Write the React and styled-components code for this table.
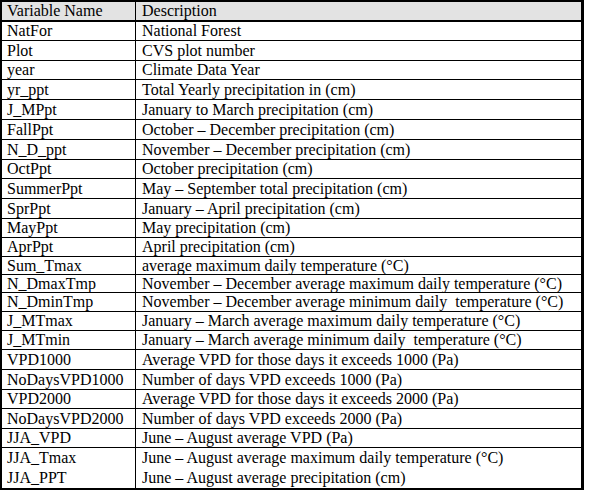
import React from 'react';
import styled, { createGlobalStyle } from 'styled-components';

const GlobalStyle = createGlobalStyle`
  html, body {
    margin: 0;
    padding: 0;
    background: #ffffff;
  }
`;

const Table = styled.div`
  box-sizing: border-box;
  width: 584px;
  border: 2px solid #000;
  border-right-width: 3px;
  font-family: 'Liberation Serif', 'Times New Roman', serif;
  font-size: 16px;
  color: #000;
`;

const Row = styled.div`
  box-sizing: border-box;
  display: grid;
  grid-template-columns: 134px 1fr;
  height: ${props => props.h}px;
  background: ${props => (props.head ? '#e3e3e3' : '#fff')};
  border-bottom: ${props => (props.last ? 0 : props.head ? 2 : props.open ? 0 : 1)}px solid #000;
`;

const Cell = styled.div`
  display: flex;
  align-items: center;
  padding-left: ${props => (props.first ? 5 : 6)}px;
  border-right: ${props => (props.first ? '1px solid #000' : 'none')};
  white-space: pre;
  overflow: hidden;
  line-height: 1;
`;

const rows = [
  ['NatFor', 'National Forest', 19],
  ['Plot', 'CVS plot number', 20],
  ['year', 'Climate Data Year', 19],
  ['yr_ppt', 'Total Yearly precipitation in (cm)', 20],
  ['J_MPpt', 'January to March precipitation (cm)', 20],
  ['FallPpt', 'October \u2013 December precipitation (cm)', 20],
  ['N_D_ppt', 'November \u2013 December precipitation (cm)', 20],
  ['OctPpt', 'October precipitation (cm)', 19],
  ['SummerPpt', 'May \u2013 September total precipitation (cm)', 20],
  ['SprPpt', 'January \u2013 April precipitation (cm)', 20],
  ['MayPpt', 'May precipitation (cm)', 19],
  ['AprPpt', 'April precipitation (cm)', 19],
  ['Sum_Tmax', 'average maximum daily temperature (\u00B0C)', 18],
  ['N_DmaxTmp', 'November \u2013 December average maximum daily temperature (\u00B0C)', 18],
  ['N_DminTmp', 'November \u2013 December average minimum daily  temperature (\u00B0C)', 19],
  ['J_MTmax', 'January \u2013 March average maximum daily temperature (\u00B0C)', 19],
  ['J_MTmin', 'January \u2013 March average minimum daily  temperature (\u00B0C)', 19],
  ['VPD1000', 'Average VPD for those days it exceeds 1000 (Pa)', 20],
  ['NoDaysVPD1000', 'Number of days VPD exceeds 1000 (Pa)', 20],
  ['VPD2000', 'Average VPD for those days it exceeds 2000 (Pa)', 19],
  ['NoDaysVPD2000', 'Number of days VPD exceeds 2000 (Pa)', 20],
  ['JJA_VPD', 'June \u2013 August average VPD (Pa)', 19],
  ['JJA_Tmax', 'June \u2013 August average maximum daily temperature (\u00B0C)', 20, 'open'],
  ['JJA_PPT', 'June \u2013 August average precipitation (cm)', 20, 'last'],
];

export default function App() {
  return (
    <>
      <GlobalStyle />
      <Table>
        <Row head h={20}>
          <Cell first>Variable Name</Cell>
          <Cell>Description</Cell>
        </Row>
        {rows.map(([name, desc, h, kind]) => (
          <Row key={name} h={h} open={kind === 'open'} last={kind === 'last'}>
            <Cell first>{name}</Cell>
            <Cell>{desc}</Cell>
          </Row>
        ))}
      </Table>
    </>
  );
}
